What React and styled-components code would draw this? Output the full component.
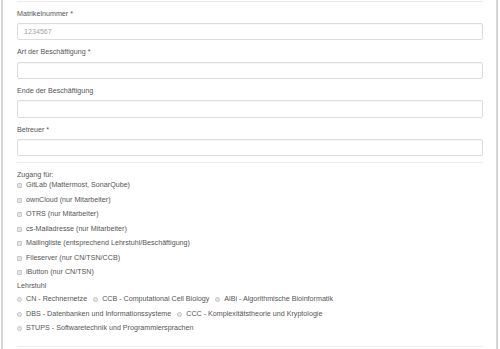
import React from "react";
import styled, { createGlobalStyle } from "styled-components";

const GlobalStyle = createGlobalStyle`
  html, body {
    margin: 0;
    padding: 0;
    background: #fff;
  }
  body {
    font-family: "Liberation Sans", Arial, sans-serif;
    font-size: 7.15px;
    color: #555;
  }
`;

const Page = styled.div`
  height: 349px;
  padding: 0 2px 0 1px;
  box-sizing: border-box;
`;

const Panel = styled.div`
  height: 100%;
  box-sizing: border-box;
  overflow: hidden;
  border-left: 2px solid #d6d6d6;
  border-right: 2px solid #d6d6d6;
  padding: 1px 13px 0 14px;
`;

const Rule = styled.hr`
  border: 0;
  border-top: 1px solid #ececec;
  height: 0;
  margin: ${(p) => p.$top || 0}px 0 ${(p) => p.$bottom || 0}px;
`;

const Field = styled.div`
  margin-bottom: 7px;
`;

const Label = styled.label`
  display: block;
  line-height: 10.4px;
  margin-bottom: 3.8px;
`;

const TextInput = styled.input`
  display: block;
  width: 100%;
  height: 17.4px;
  box-sizing: border-box;
  border: 1px solid #dcdcdc;
  border-radius: 2px;
  box-shadow: inset 0 1px 1px rgba(0, 0, 0, 0.03);
  padding: 0 6px;
  font-family: inherit;
  font-size: 7.15px;
  color: #555;
  background: #fff;
  outline: none;
  &::placeholder {
    color: #a3a3a3;
  }
`;

const SectionLabel = styled.div`
  line-height: 10.4px;
  margin-top: ${(p) => p.$top || 0}px;
`;

const List = styled.div`
  display: flex;
  flex-direction: column;
  gap: ${(p) => p.$gap}px;
  margin-top: ${(p) => p.$top || 0}px;
`;

const Row = styled.div`
  display: flex;
  align-items: center;
  height: 11px;
  gap: 6px;
`;

const Option = styled.label`
  display: flex;
  align-items: center;
  gap: 4px;
  line-height: 11px;
  white-space: nowrap;
`;

const Box = styled.span`
  display: inline-block;
  width: 5px;
  height: 5px;
  box-sizing: border-box;
  border: 1px solid #c6c6c6;
  background: #e6e6e6;
  border-radius: ${(p) => (p.$round ? "50%" : "1px")};
`;

const fields = [
  { label: "Matrikelnummer *", placeholder: "1234567" },
  { label: "Art der Beschäftigung *" },
  { label: "Ende der Beschäftigung" },
  { label: "Betreuer *" },
];

const access = [
  "GitLab (Mattermost, SonarQube)",
  "ownCloud (nur Mitarbeiter)",
  "OTRS (nur Mitarbeiter)",
  "cs-Mailadresse (nur Mitarbeiter)",
  "Mailingliste (entsprechend Lehrstuhl/Beschäftigung)",
  "Fileserver (nur CN/TSN/CCB)",
  "iButton (nur CN/TSN)",
];

const chairs = [
  [
    "CN - Rechnernetze",
    "CCB - Computational Cell Biology",
    "AlBi - Algorithmische Bioinformatik",
  ],
  [
    "DBS - Datenbanken und Informationssysteme",
    "CCC - Komplexitätstheorie und Kryptologie",
  ],
  ["STUPS - Softwaretechnik und Programmiersprachen"],
];

export default function App() {
  return (
    <>
      <GlobalStyle />
      <Page>
        <Panel>
          <Rule $bottom={6.8} />
          {fields.map((f) => (
            <Field key={f.label}>
              <Label>{f.label}</Label>
              <TextInput placeholder={f.placeholder || ""} readOnly />
            </Field>
          ))}
          <Rule $top={-1} $bottom={6.6} />
          <SectionLabel>Zugang für:</SectionLabel>
          <List $gap={3.5}>
            {access.map((a) => (
              <Row key={a}>
                <Option>
                  <Box />
                  {a}
                </Option>
              </Row>
            ))}
          </List>
          <SectionLabel $top={3.3}>Lehrstuhl</SectionLabel>
          <List $gap={3.2} $top={2.6}>
            {chairs.map((row, i) => (
              <Row key={i}>
                {row.map((c) => (
                  <Option key={c}>
                    <Box $round />
                    {c}
                  </Option>
                ))}
              </Row>
            ))}
          </List>
          <Rule $top={12} />
        </Panel>
      </Page>
    </>
  );
}
